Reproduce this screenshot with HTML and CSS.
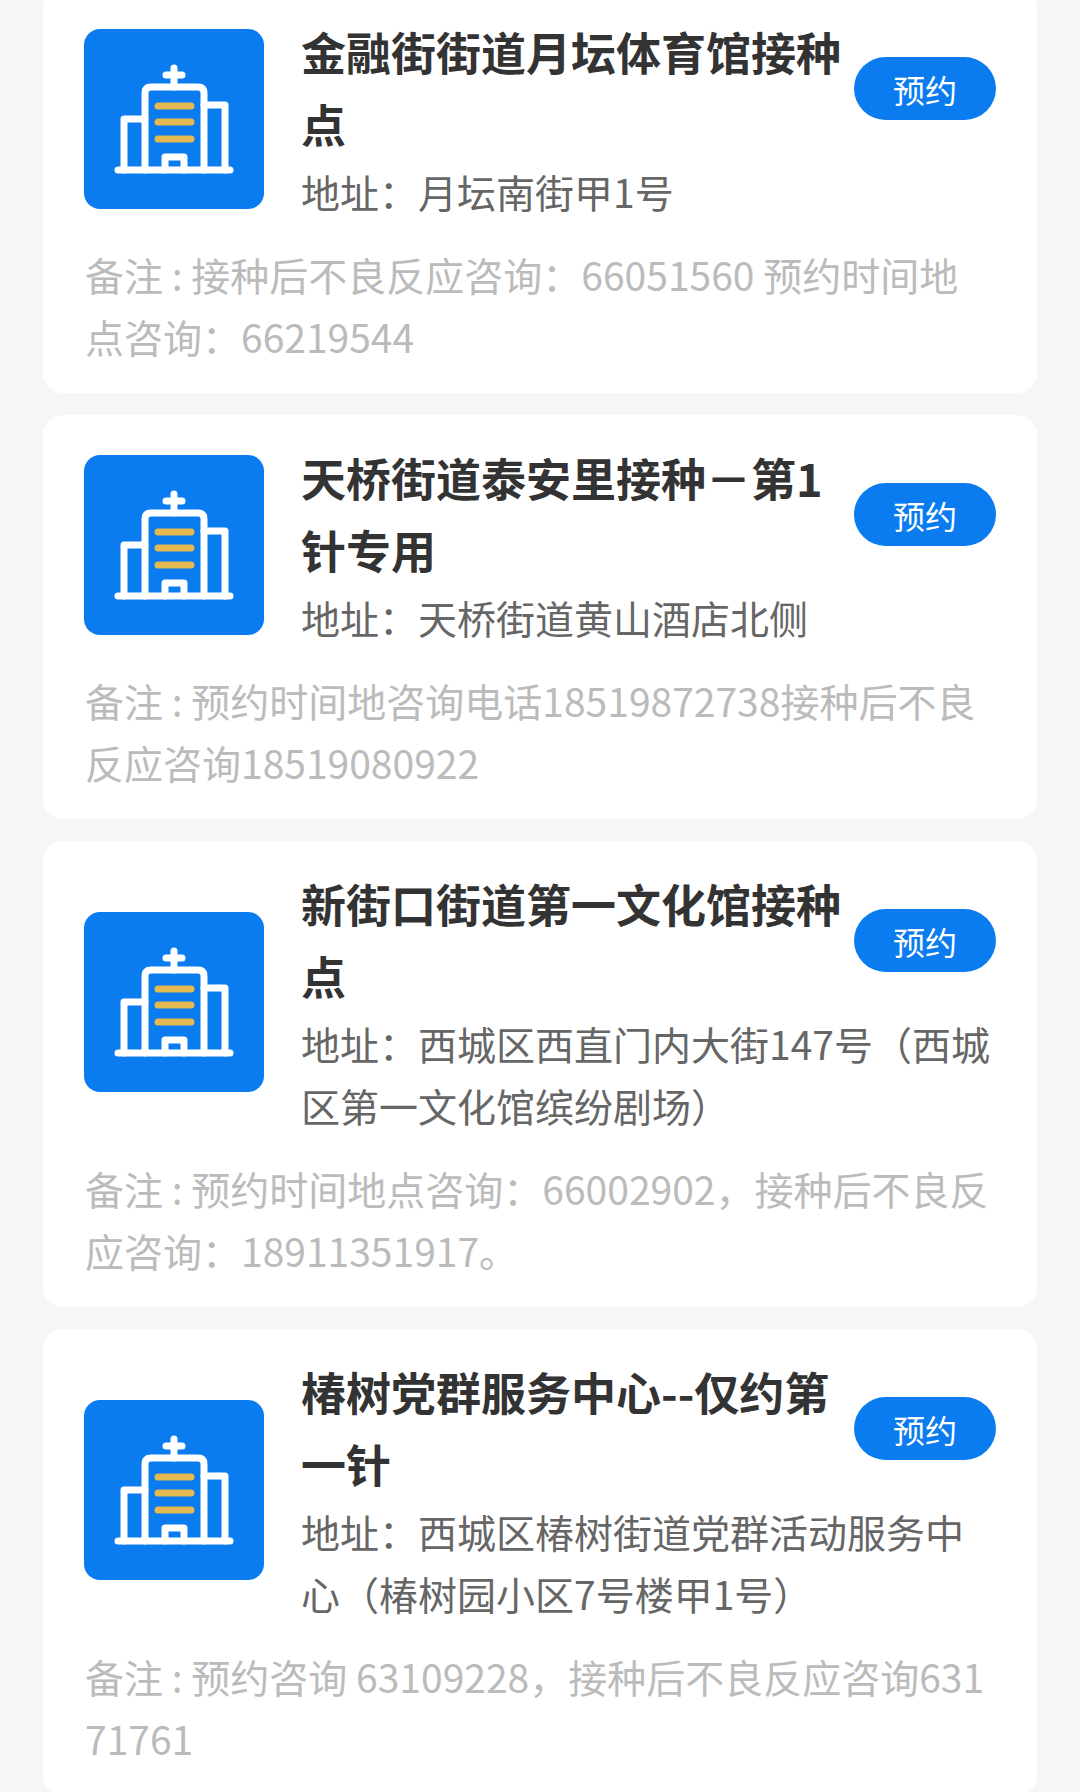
FILE: index.html
```html
<!DOCTYPE html>
<html lang="zh-CN">
<head>
  <meta charset="UTF-8">
  <meta name="viewport" content="width=device-width, initial-scale=1.0">
  <title>接种点列表</title>
  <link rel="stylesheet" href="styles.css">
</head>
<body>
  <svg class="defs" width="0" height="0">
    <symbol id="hospital" viewBox="0 0 180 180">
      <g fill="none" stroke="#fff" stroke-width="7" stroke-linecap="round" stroke-linejoin="round">
        <path d="M34 141H146"/>
        <path d="M90 39V58M82 46H98"/>
        <path d="M61 141V64Q61 58 67 58H114Q120 58 120 64V141"/>
        <path d="M61 90H40V141"/>
        <path d="M120 76H141V141"/>
        <path d="M81 141V128H100V141"/>
      </g>
      <g fill="none" stroke="#e4b950" stroke-width="7" stroke-linecap="round">
        <path d="M74 77H107M74 93H107M74 110H107"/>
      </g>
    </symbol>
  </svg>
  <ul class="list">
    <li class="card">
      <div class="main">
        <svg class="pic"><use href="#hospital"/></svg>
        <div class="info">
          <div class="head">
            <h3 class="name">金融街街道月坛体育馆接种点</h3>
            <button class="book">预约</button>
          </div>
          <p class="addr">地址：月坛南街甲1号</p>
        </div>
      </div>
      <p class="note">备注 : 接种后不良反应咨询：66051560 预约时间地点咨询：66219544</p>
    </li>
    <li class="card">
      <div class="main">
        <svg class="pic"><use href="#hospital"/></svg>
        <div class="info">
          <div class="head">
            <h3 class="name">天桥街道泰安里接种－第1针专用</h3>
            <button class="book">预约</button>
          </div>
          <p class="addr">地址：天桥街道黄山酒店北侧</p>
        </div>
      </div>
      <p class="note">备注 : 预约时间地咨询电话18519872738接种后不良反应咨询18519080922</p>
    </li>
    <li class="card">
      <div class="main">
        <svg class="pic"><use href="#hospital"/></svg>
        <div class="info">
          <div class="head">
            <h3 class="name">新街口街道第一文化馆接种点</h3>
            <button class="book">预约</button>
          </div>
          <p class="addr">地址：西城区西直门内大街147号（西城区第一文化馆缤纷剧场）</p>
        </div>
      </div>
      <p class="note">备注 : 预约时间地点咨询：66002902，接种后不良反应咨询：18911351917。</p>
    </li>
    <li class="card">
      <div class="main">
        <svg class="pic"><use href="#hospital"/></svg>
        <div class="info">
          <div class="head">
            <h3 class="name">椿树党群服务中心--仅约第一针</h3>
            <button class="book">预约</button>
          </div>
          <p class="addr">地址：西城区椿树街道党群活动服务中心（椿树园小区7号楼甲1号）</p>
        </div>
      </div>
      <p class="note">备注 : 预约咨询 63109228，接种后不良反应咨询63171761</p>
    </li>
  </ul>
</body>
</html>
```

FILE: styles.css
```css
* {
  margin: 0;
  padding: 0;
  box-sizing: border-box;
}

html, body {
  height: 1792px;
  overflow: hidden;
}

body {
  background-color: #f6f6f6;
  font-family: "Noto Sans CJK SC", "Noto Sans", sans-serif;
}

.defs {
  display: block;
}

.list {
  margin: -11px 43px 0 43px;
  list-style: none;
}

.card {
  margin-bottom: 22px;
  padding: 27px 46px 26px 41px;
  background-color: #fff;
  border-radius: 20px;
}

.main {
  display: flex;
  align-items: center;
  margin-right: -5px;
}

.pic {
  flex: none;
  margin-right: 37px;
  width: 180px;
  height: 180px;
  background-color: #0a7cf0;
  border-radius: 16px;
}

.info {
  flex: 1;
  min-width: 0;
}

.head {
  display: flex;
  align-items: flex-start;
  justify-content: space-between;
}

.name {
  width: 546px;
  line-height: 72px;
  font-size: 45px;
  font-weight: 700;
  color: #333;
}

.book {
  flex: none;
  margin-top: 41px;
  width: 142px;
  height: 63px;
  border: none;
  border-radius: 32px;
  background-color: #0a7cf0;
  font-family: inherit;
  font-size: 32px;
  color: #fff;
}

.addr {
  line-height: 62px;
  font-size: 39px;
  color: #666;
}

.note {
  margin-top: 21px;
  margin-left: 1px;
  line-height: 62px;
  font-size: 39px;
  color: #bbb;
  word-break: break-all;
}
```
